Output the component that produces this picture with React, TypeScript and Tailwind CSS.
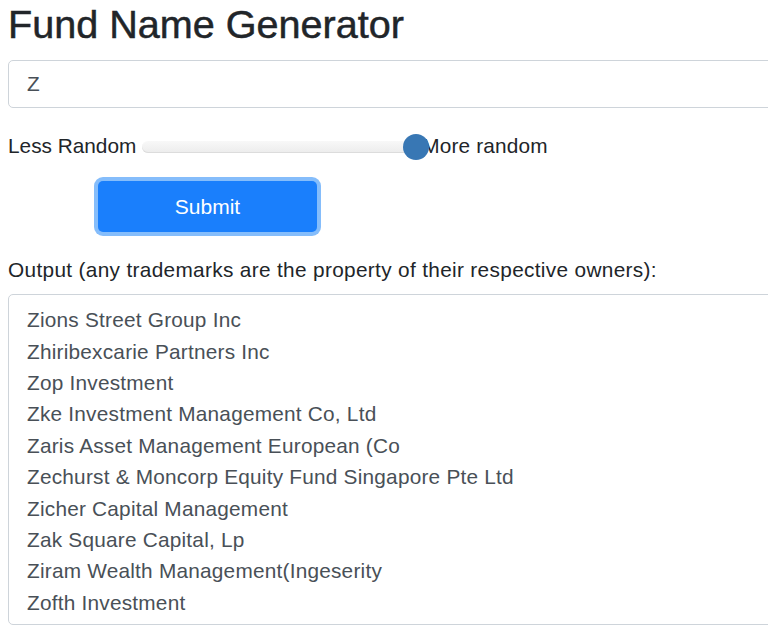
const names = [
  "Zions Street Group Inc",
  "Zhiribexcarie Partners Inc",
  "Zop Investment",
  "Zke Investment Management Co, Ltd",
  "Zaris Asset Management European (Co",
  "Zechurst & Moncorp Equity Fund Singapore Pte Ltd",
  "Zicher Capital Management",
  "Zak Square Capital, Lp",
  "Ziram Wealth Management(Ingeserity",
  "Zofth Investment",
];

const App = () => {
  return (
    <div className="w-full h-[643px] overflow-hidden bg-white font-['Liberation_Sans',Arial,sans-serif] text-[#212529] text-[20.8px] leading-[31.2px]">
      <div className="w-[800px] pl-2">
        <h1 className="text-[39.6px] leading-[48px] font-normal text-[#212529] [-webkit-text-stroke:0.5px_#212529]">
          Fund Name Generator
        </h1>

        <div className="mt-3 h-[48px] flex items-center border border-[#ced4da] rounded-[5px] px-[18px] text-[#495057]">
          Z
        </div>

        <div className="mt-[22px] flex items-center h-[31px]">
          <span>Less Random</span>
          <div className="relative ml-[6px] mt-[2px] w-[280px] h-[12px] rounded-full bg-gradient-to-b from-[#f8f8f8] to-[#ececec] shadow-[inset_0_-1px_0_#dcdcdc]">
            <div className="absolute z-10 right-[-7px] top-1/2 -translate-y-1/2 w-[26px] h-[26px] rounded-full bg-[#3877b4]" />
          </div>
          <span className="tracking-[0.15px]">More random</span>
        </div>

        <button className="mt-[20px] ml-[90px] w-[219px] h-[51px] rounded-[5px] bg-[#1a7ffc] text-white text-[21px] ring-4 ring-[#85bdfb] flex items-center justify-center">
          Submit
        </button>

        <p className="mt-[22px] tracking-[0.33px]">
          Output (any trademarks are the property of their respective owners):
        </p>

        <div className="mt-[9px] border border-[#ced4da] rounded-[5px] pl-[18px] pt-[9px] pb-[6px] text-[#495057] leading-[31.4px] tracking-[0.22px]">
          {names.map((n) => (
            <div key={n}>{n}</div>
          ))}
        </div>
      </div>
    </div>
  );
};

export default App;
